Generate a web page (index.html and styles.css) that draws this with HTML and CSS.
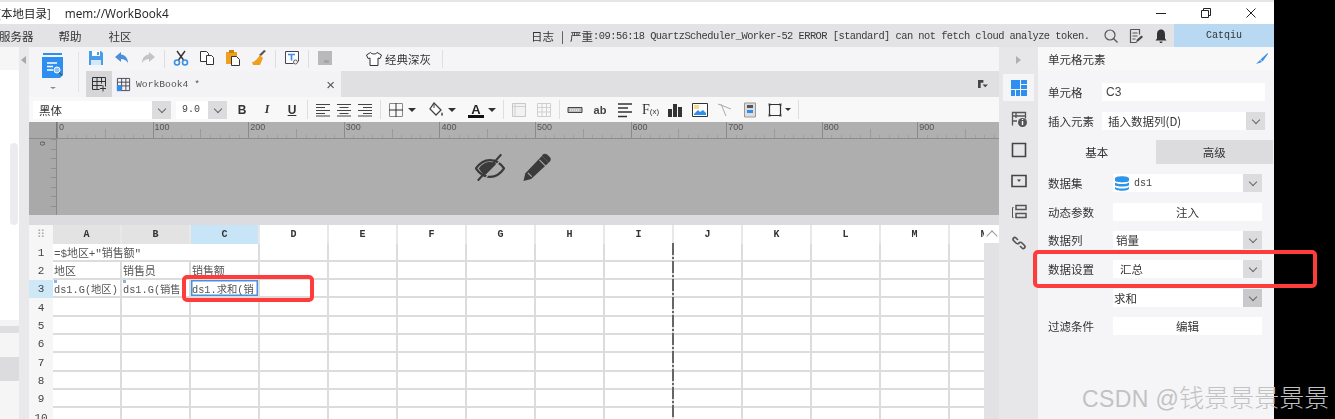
FILE: index.html
```html
<!DOCTYPE html>
<html lang="zh">
<head>
<meta charset="utf-8">
<title>WorkBook4</title>
<link rel="stylesheet" href="styles.css">
</head>
<body>
<div class="screen">
  <div class="app">
    <header class="titlebar">
      <span class="title-path">[本地目录]</span>
      <span class="title-file">mem://WorkBook4</span>
      <div class="win-ctrls">
        <svg class="win-ico" viewBox="0 0 12 12"><path d="M1 6.5h10" stroke="#222" stroke-width="1"/></svg>
        <svg class="win-ico" viewBox="0 0 12 12"><path d="M1.5 3.5h7v7h-7zM3.5 3.5v-2h7v7h-2" fill="none" stroke="#222"/></svg>
        <svg class="win-ico" viewBox="0 0 12 12"><path d="M1.5 1.5l9 9M10.5 1.5l-9 9" stroke="#222"/></svg>
      </div>
    </header>
    <nav class="menubar">
      <span class="menu-item first">服务器</span>
      <span class="menu-item">帮助</span>
      <span class="menu-item">社区</span>
      <div class="log"><span>日志</span><span class="log-sep">|</span><span>严重</span><span class="log-msg">:09:56:18 QuartzScheduler_Worker-52 ERROR [standard] can not fetch cloud analyze token.</span></div>
      <div class="menu-icons">
        <svg class="ico" viewBox="0 0 16 16"><circle cx="7" cy="7" r="5" fill="none" stroke="#555" stroke-width="1.2"/><path d="M10.5 10.5l4 4" stroke="#555" stroke-width="1.2"/></svg>
        <svg class="ico" viewBox="0 0 16 16"><path d="M2.5 1.5h9v5M2.5 1.5v13h6" fill="none" stroke="#555" stroke-width="1.2"/><path d="M4.5 5h5M4.5 8h5M4.5 11h3" stroke="#555"/><path d="M8 14.5l1-3 4.500-4 1.500 1.500-4.500 4z" fill="#444"/></svg>
        <svg class="ico" viewBox="0 0 16 16"><path d="M8 1.500c-3 0-4 2.500-4 5v4l-1.500 2h11L12 10.500v-4c0-2.500-1-5-4-5zM6.500 13.500h3c0 2-3 2-3 0z" fill="#333"/></svg>
      </div>
      <div class="user">Catqiu</div>
    </nav>

    <div class="workspace">
      <aside class="leftpane">
        <div class="lp-head"></div>
        <div class="lp-tree"><div class="lp-thumb"></div></div>
        <div class="lp-bar"></div>
        <div class="lp-list"><div class="lp-sel"></div></div>
      </aside>
      <div class="strip"><span class="tri-left"></span></div>

      <main class="editor">
        <div class="editor-top">
          <div class="brand">
            <svg class="brand-ico" viewBox="0 0 21 29"><path d="M1 0h19v2H1z" fill="#2f8ff0"/><path d="M0 4h21v18l-3 3H0z" fill="#2f8ff0"/><path d="M5 10h10M5 13.500h6M5 17h6" stroke="#fff" stroke-width="1.500"/><circle cx="15" cy="17" r="3" fill="#8cc2f5" stroke="#fff"/><path d="M17 19.500l3 3" stroke="#555" stroke-width="1.300"/></svg>
            <span class="caret small"></span>
          </div>
          <div class="top-right">
            <div class="quick">
              <div class="tools">
                <svg class="ico" viewBox="0 0 16 16"><path d="M1 1h12l2 2v12H1z" fill="#4a9be8"/><path d="M4 1h8v5H4z" fill="#fff"/><path d="M3 10h10v5H3z" fill="#d5e8fa"/><path d="M9 2h2v3H9z" fill="#4a9be8"/></svg>
                <svg class="ico" viewBox="0 0 16 16"><path d="M7 2L1 7l6 5V9c3 0 5 1 7 4 0-5-3-8-7-8.500z" fill="#4a8fd8"/></svg>
                <svg class="ico" viewBox="0 0 16 16"><path d="M9 2l6 5-6 5V9c-3 0-5 1-7 4 0-5 3-8 7-8.500z" fill="#c4c4c6"/></svg>
              </div>
              <i class="sep"></i>
              <div class="tools">
                <svg class="ico" viewBox="0 0 16 16"><path d="M4 1l6.500 9M12 1L5.500 10" stroke="#333" stroke-width="1.400"/><circle cx="4" cy="12.500" r="2.500" fill="none" stroke="#3b8fe6" stroke-width="1.600"/><circle cx="12" cy="12.500" r="2.500" fill="none" stroke="#3b8fe6" stroke-width="1.600"/></svg>
                <svg class="ico" viewBox="0 0 16 16"><path d="M1.500 1.500h6l2 2v8h-8z" fill="#fff" stroke="#333"/><path d="M7.500 5.500h5l2 2v7h-7z" fill="#fff" stroke="#333"/></svg>
                <svg class="ico" viewBox="0 0 16 16"><path d="M1 2h11v12H1z" fill="#f0a020"/><path d="M4 0h5v3H4z" fill="#c98214"/><path d="M6.500 6.500h5l3 3v6h-8z" fill="#fff" stroke="#333"/></svg>
                <svg class="ico" viewBox="0 0 16 16"><path d="M15 1l-5 5-2-1 5-5z" fill="#555"/><path d="M9 5l3 3-3 7H2l-1-3c3 0 5-3 8-7z" fill="#f0a020"/></svg>
              </div>
              <i class="sep"></i>
              <svg class="ico" viewBox="0 0 16 16"><path d="M1.500 1.500h13v10M1.500 1.500v12h8" fill="#fff" stroke="#445"/><path d="M4 4.500h7M7.500 4.500v6" stroke="#3b8fe6" stroke-width="1.600"/><circle cx="11.500" cy="12" r="2" fill="none" stroke="#666"/></svg>
              <i class="sep"></i>
              <svg class="ico" viewBox="0 0 16 16"><path d="M1 1h14v14H1z" fill="#b9b9bb"/><path d="M7 10h5v3H7z" fill="#a5a5a7"/></svg>
              <div class="theme">
                <svg class="ico" viewBox="0 0 16 16"><path d="M5 1.500L1 4l1.500 3.500L4.500 7v7.500h8V7l2 .5L16 4 11.500 1.500c-.5 2-5.500 2-6.500 0z" transform="translate(-.5)" fill="#fff" stroke="#333"/></svg>
                <span>经典深灰</span>
              </div>
              <i class="sep wide"></i>
            </div>
            <div class="tabstrip">
              <div class="tab-add">
                <svg class="ico" viewBox="0 0 16 16"><path d="M1.500 1.500h13v9M1.500 1.500v12h7M1.500 5.500h13M1.500 9.500h10M6 1.500v12M10.500 1.500v6" fill="none" stroke="#333"/><path d="M12 9.500v6M9 12.500h6" stroke="#333"/></svg>
              </div>
              <div class="tab">
                <svg class="ico tab-ico" viewBox="0 0 16 16"><path d="M1.500 1.500h13v13h-13zM1.500 5.500h13M1.500 9.500h13M6 1.500v13M10.500 1.500v13" fill="none" stroke="#445"/><path d="M1 9h5v6H1z" fill="#2f8ff0"/></svg>
                <span class="tab-name">WorkBook4 *</span>
                <span class="tab-close">×</span>
              </div>
              <svg class="tab-menu" viewBox="0 0 12 10"><path d="M1 0h6v3H4v6H1z" fill="#444"/><path d="M6 5h6L9 8z" fill="#444"/></svg>
            </div>
          </div>
        </div>

        <div class="format">
          <div class="select font-sel"><span class="sel-text cjk-big">黑体</span><span class="sel-arrow"><i class="chev"></i></span></div>
          <div class="select size-sel"><span class="sel-text mono">9.0</span><span class="sel-arrow"><i class="chev"></i></span></div>
          <div class="tools bius">
            <b class="fmt-b">B</b><i class="fmt-i">I</i><u class="fmt-u">U</u>
          </div>
          <i class="sep"></i>
          <div class="tools narrow">
            <svg class="ico" viewBox="0 0 16 16"><path d="M1 2.500h14M1 5.500h9M1 8.500h14M1 11.500h9M1 14h14" stroke="#444"/></svg>
            <svg class="ico" viewBox="0 0 16 16"><path d="M1 2.500h14M3.500 5.500h9M1 8.500h14M3.500 11.500h9M1 14h14" stroke="#444"/></svg>
            <svg class="ico" viewBox="0 0 16 16"><path d="M1 2.500h14M6 5.500h9M1 8.500h14M6 11.500h9M1 14h14" stroke="#444"/></svg>
          </div>
          <i class="sep"></i>
          <svg class="ico" viewBox="0 0 16 16"><path d="M1.500 1.500h13v13h-13z" fill="none" stroke="#888"/><path d="M8 1v14M1 8h14" stroke="#333"/></svg>
          <span class="caret"></span>
          <svg class="ico gap-l" viewBox="0 0 16 16"><path d="M6 1l7 7-5 5-6-6z" fill="#fff" stroke="#444" stroke-width="1.300"/><path d="M6 1v5" stroke="#444"/><path d="M14 10c1 2 1.500 3 0 4-1.200-1-1-2 0-4z" fill="#444"/></svg>
          <span class="caret"></span>
          <svg class="ico gap-l" viewBox="0 0 16 16"><path d="M0 13h16v3H0z" fill="#111"/><text class="a-glyph" x="8" y="11.500">A</text></svg>
          <span class="caret"></span>
          <i class="sep"></i>
          <div class="tools">
            <svg class="ico" viewBox="0 0 16 16"><path d="M1.500 1.500h13v13h-13z" fill="#f2f2f2" stroke="#c8c8c8"/><path d="M1.500 4.500h13M4 1.500v13" stroke="#d0d0d0"/></svg>
            <svg class="ico" viewBox="0 0 16 16"><path d="M1.500 1.500h13v13h-13zM1.500 5.500h13M1.500 10h13M6 1.500v13M10.500 1.500v13" fill="none" stroke="#cfcfcf"/></svg>
          </div>
          <i class="sep"></i>
          <div class="tools">
            <svg class="ico" viewBox="0 0 16 16"><path d="M1 5.500h14v5H1z" fill="#bbb" stroke="#444"/><path d="M3 8h10" stroke="#fff" stroke-dasharray="1 1"/></svg>
            <span class="ab">ab</span>
            <svg class="ico" viewBox="0 0 16 16"><path d="M1 2h14M1 6h10M1 10h14M1 14.500h9" stroke="#333" stroke-width="1.700"/></svg>
            <span class="fx">F<small>(x)</small></span>
            <svg class="ico" viewBox="0 0 16 16"><path d="M1 7h4v8H1zM6 2h4v13H6zM11 5h4v10h-4z" fill="#333"/></svg>
            <svg class="ico" viewBox="0 0 16 16"><path d="M.5 1.500h15v13H.5z" fill="#fff" stroke="#333"/><path d="M2 12l4-4 2 2 3-2 3 3v2H2z" fill="#2f8ff0"/><path d="M2 3h5v4H2z" fill="#fbd98a"/></svg>
            <svg class="ico" viewBox="0 0 16 16"><path d="M1 2l13 5M4 2l5 12" stroke="#aaa" fill="none"/></svg>
            <svg class="ico" viewBox="0 0 16 16"><path d="M2.500 1h11v14h-11z" fill="#ddd" stroke="#999"/><path d="M5 3h6v3H5z" fill="#555"/><path d="M5 8h6v3H5z" fill="#2f8ff0"/></svg>
            <svg class="ico" viewBox="0 0 16 16"><path d="M2.500 2.500h11v11h-11z" fill="none" stroke="#333" stroke-width="1.200"/><path d="M1 1h3v3H1zM12 1h3v3h-3zM1 12h3v3H1zM12 12h3v3h-3z" fill="#444" opacity=".35"/></svg>
          </div>
          <span class="caret tiny"></span>
          <i class="sep"></i>
        </div>

        <div class="ruler">
          <div class="ruler-corner"></div>
          <div class="ruler-marks">
            <span>0</span><span>100</span><span>200</span><span>300</span><span>400</span><span>500</span><span>600</span><span>700</span><span>800</span><span>900</span>
          </div>
        </div>
        <div class="canvas">
          <div class="v-ruler"><span class="v-zero">0</span></div>
          <div class="canvas-icons">
            <svg class="big-ico" viewBox="0 0 32 30"><path d="M1 16c4-6 9-9 15-9s11 3 15 9c-4 6-9 9-15 9S5 22 1 16z" fill="none" stroke="#3a3a3a" stroke-width="2.400"/><path d="M4 16c3-5 8-7 12-7 3 0 5 1 7 2L11 23c-3-1-5-4-7-7z" fill="#3a3a3a"/><path d="M28 1L3 29" stroke="#3a3a3a" stroke-width="2.400"/><path d="M28 3L6 29" stroke="#adadad" stroke-width="1.400" transform="translate(2 1)"/></svg>
            <svg class="big-ico" viewBox="0 0 30 30"><path d="M20 3l7 7L9 27l-8 2 2-8z" fill="#3a3a3a"/><path d="M21 1.500c1-1 3-1 4.500 0l3 3c1 1.500 1 3 0 4L27 10l-7-7z" fill="#3a3a3a"/><path d="M17.500 7l6.500 6.500M5.500 20.500l4 4" stroke="#adadad" stroke-width="1.100"/></svg>
          </div>
        </div>
        <div class="canvas-gap"></div>

        <div class="sheet-wrap">
          <div class="sheet">
            <div class="row head">
              <div class="rh corner">⠿</div>
              <div class="c ch on">A</div><div class="c ch on">B</div><div class="c ch sel">C</div><div class="c ch">D</div><div class="c ch">E</div><div class="c ch">F</div><div class="c ch">G</div><div class="c ch">H</div><div class="c ch">I</div><div class="c ch">J</div><div class="c ch">K</div><div class="c ch">L</div><div class="c ch">M</div><div class="c ch">N</div>
            </div>
            <div class="row"><div class="rh">1</div><div class="c merged">=$地区+"销售额"</div><div class="c"></div><div class="c"></div><div class="c"></div><div class="c"></div><div class="c"></div><div class="c"></div><div class="c"></div><div class="c"></div><div class="c"></div><div class="c"></div><div class="c"></div></div>
            <div class="row"><div class="rh">2</div><div class="c">地区</div><div class="c">销售员</div><div class="c">销售额</div><div class="c"></div><div class="c"></div><div class="c"></div><div class="c"></div><div class="c"></div><div class="c"></div><div class="c"></div><div class="c"></div><div class="c"></div><div class="c"></div><div class="c"></div></div>
            <div class="row"><div class="rh active">3</div><div class="c expand">ds1.G(地区)</div><div class="c expand">ds1.G(销售</div><div class="c current">ds1.求和(销</div><div class="c"></div><div class="c"></div><div class="c"></div><div class="c"></div><div class="c"></div><div class="c"></div><div class="c"></div><div class="c"></div><div class="c"></div><div class="c"></div><div class="c"></div></div>
            <div class="row"><div class="rh">4</div><div class="c"></div><div class="c"></div><div class="c"></div><div class="c"></div><div class="c"></div><div class="c"></div><div class="c"></div><div class="c"></div><div class="c"></div><div class="c"></div><div class="c"></div><div class="c"></div><div class="c"></div><div class="c"></div></div>
            <div class="row"><div class="rh">5</div><div class="c"></div><div class="c"></div><div class="c"></div><div class="c"></div><div class="c"></div><div class="c"></div><div class="c"></div><div class="c"></div><div class="c"></div><div class="c"></div><div class="c"></div><div class="c"></div><div class="c"></div><div class="c"></div></div>
            <div class="row"><div class="rh">6</div><div class="c"></div><div class="c"></div><div class="c"></div><div class="c"></div><div class="c"></div><div class="c"></div><div class="c"></div><div class="c"></div><div class="c"></div><div class="c"></div><div class="c"></div><div class="c"></div><div class="c"></div><div class="c"></div></div>
            <div class="row"><div class="rh">7</div><div class="c"></div><div class="c"></div><div class="c"></div><div class="c"></div><div class="c"></div><div class="c"></div><div class="c"></div><div class="c"></div><div class="c"></div><div class="c"></div><div class="c"></div><div class="c"></div><div class="c"></div><div class="c"></div></div>
            <div class="row"><div class="rh">8</div><div class="c"></div><div class="c"></div><div class="c"></div><div class="c"></div><div class="c"></div><div class="c"></div><div class="c"></div><div class="c"></div><div class="c"></div><div class="c"></div><div class="c"></div><div class="c"></div><div class="c"></div><div class="c"></div></div>
            <div class="row"><div class="rh">9</div><div class="c"></div><div class="c"></div><div class="c"></div><div class="c"></div><div class="c"></div><div class="c"></div><div class="c"></div><div class="c"></div><div class="c"></div><div class="c"></div><div class="c"></div><div class="c"></div><div class="c"></div><div class="c"></div></div>
            <div class="row"><div class="rh">10</div><div class="c"></div><div class="c"></div><div class="c"></div><div class="c"></div><div class="c"></div><div class="c"></div><div class="c"></div><div class="c"></div><div class="c"></div><div class="c"></div><div class="c"></div><div class="c"></div><div class="c"></div><div class="c"></div></div>
            <div class="page-break"></div>
          </div>
          <div class="vscroll"><div class="vs-up"><i class="chev up"></i></div></div>
        </div>
      </main>

      <div class="side">
        <span class="tri-right"></span>
        <div class="side-btn active">
          <svg class="side-ico" viewBox="0 0 16 16"><path d="M0 0h9v9H0zM10 0h6v4h-6zM10 5h6v4h-6zM0 10h4v6H0zM5 10h4v6H5zM10 10h6v6h-6z" fill="#2f8ff0"/></svg>
        </div>
        <div class="side-btn">
          <svg class="side-ico" viewBox="0 0 16 16"><path d="M1.500 14.500v-13h13v6M1.500 5h13M5 1.500V7M1.500 10H6" fill="none" stroke="#555" stroke-width="1.300"/><circle cx="11.500" cy="11.500" r="4.500" fill="#555"/><path d="M11.500 10v4M11.500 8v1" stroke="#fff" stroke-width="1.400"/></svg>
        </div>
        <div class="side-btn">
          <svg class="side-ico" viewBox="0 0 16 16"><path d="M1.500 1.500h13v13h-13z" fill="none" stroke="#444" stroke-width="1.600"/></svg>
        </div>
        <div class="side-btn">
          <svg class="side-ico" viewBox="0 0 16 16"><path d="M1 2.500h14v11H1z" fill="none" stroke="#444" stroke-width="1.600"/><path d="M6 6.500h4L8 9z" fill="#444"/></svg>
        </div>
        <div class="side-btn">
          <svg class="side-ico" viewBox="0 0 16 16"><path d="M5 1.500h10v4H5zM5 9.500h10v4H5z" fill="none" stroke="#555" stroke-width="1.500"/><path d="M2.500 3.500h-1v10h1" fill="none" stroke="#555"/></svg>
        </div>
        <div class="side-btn">
          <svg class="side-ico" viewBox="0 0 16 16"><path d="M7 5L5 3C3.500 1.500 1 3.500 2.500 5.500L5 8c1 1 2.500 1 3 0M9 11l2 2c1.500 1.500 4-.5 2.500-2.500L11 8c-1-1-2.500-1-3 0" fill="none" stroke="#555" stroke-width="1.700"/></svg>
        </div>
      </div>

      <section class="panel">
        <div class="panel-head">
          <span>单元格元素</span>
          <svg class="panel-check" viewBox="0 0 12 11"><path d="M11.600 0L4.500 6.500 6.500 8.500 12 1zM4 7l2 2L0 11z" fill="#3b8fe6"/></svg>
        </div>
        <div class="form first-form">
          <label>单元格</label>
          <div class="input"><span class="latin">C3</span></div>
          <label>插入元素</label>
          <div class="select"><span class="sel-text ins">插入数据列(D)</span><span class="sel-arrow"><i class="chev"></i></span></div>
        </div>
        <div class="tabs">
          <div class="tab2 cur">基本</div>
          <div class="tab2">高级</div>
        </div>
        <div class="form second-form">
          <label>数据集</label>
          <div class="select"><span class="sel-text ds"><svg class="db" viewBox="0 0 14 15"><path d="M0 2.500C0 -.5 14 -.5 14 2.500v2C14 7 0 7 0 4.500zM0 6.500c3 2 11 2 14 0v2.500C14 11 0 11 0 9zM0 11c3 2 11 2 14 0v1.500C14 15.500 0 15.500 0 12.500z" fill="#2f95e8"/></svg><span class="mono">ds1</span></span><span class="sel-arrow"><i class="chev"></i></span></div>
          <label>动态参数</label>
          <div class="button">注入</div>
          <label>数据列</label>
          <div class="select"><span class="sel-text tight">销量</span><span class="sel-arrow"><i class="chev"></i></span></div>
          <label>数据设置</label>
          <div class="select"><span class="sel-text loose">汇总</span><span class="sel-arrow"><i class="chev"></i></span></div>
          <span></span>
          <div class="select"><span class="sel-text flush">求和</span><span class="sel-arrow dark"><i class="chev"></i></span></div>
          <label>过滤条件</label>
          <div class="button">编辑</div>
        </div>
      </section>
    </div>
  </div>
  <div class="mark mark-cell"></div>
  <div class="mark mark-setting"></div>
  <div class="watermark">CSDN @<span class="wm-cjk">钱景景景景景</span></div>
</div>
</body>
</html>
```

FILE: styles.css
```css
* { box-sizing: border-box; }
html, body { margin: 0; padding: 0; background: #000; }
body {
  font-family: "Noto Sans CJK SC", "Liberation Sans", sans-serif;
  font-size: 11.5px;
  color: #333;
  overflow: hidden;
}
.screen { position: relative; width: 1335px; height: 419px; overflow: hidden; background: #000; }
.app { width: 1274px; height: 419px; display: flex; flex-direction: column; background: #f5f5f7; filter: blur(.35px); }

.titlebar { height: 24px; flex: none; background: #fff; border-top: 2px solid #e6e6e6; display: flex; align-items: center; color: #222; overflow: hidden; }
.title-path { margin-left: -3px; font-size: 11.500px; }
.title-file { margin-left: 14px; font-family: "Open Sans", sans-serif; font-size: 11.800px; }
.win-ctrls { margin-left: auto; display: flex; gap: 33px; padding-right: 17px; }
.win-ico { width: 12px; height: 12px; }

.menubar { height: 23px; flex: none; background: #e3e3e5; display: flex; align-items: center; color: #333; overflow: hidden; }
.menu-item { margin-right: 27px; white-space: nowrap; }
.menu-item.first { margin-left: -1px; margin-right: 25px; }
.log { position: absolute; left: 531px; top: 25px; height: 22px; display: flex; align-items: center; white-space: nowrap; }
.log-sep { margin: 0 6px 0 7px; }
.log-msg { font-family: "Liberation Mono", monospace; font-size: 10.400px; letter-spacing: -.53px; color: #3a3a3a; }
.menu-icons { margin-left: auto; display: flex; gap: 9px; padding-right: 5px; align-items: center; }
.user { width: 100px; height: 23px; background: #b9d9f3; display: flex; align-items: center; justify-content: center; font-family: "Liberation Mono", monospace; font-size: 10px; color: #333; }

.ico { width: 16px; height: 16px; flex: none; display: block; }
.workspace { flex: 1; display: flex; min-height: 0; }

.leftpane { width: 19px; flex: none; background: #fff; display: flex; flex-direction: column; }
.lp-head { height: 23px; background: #f6f6f7; }
.lp-tree { height: 256px; background: #fff; position: relative; padding-top: 73px; padding-left: 10px; border-bottom: 6px solid #f3f3f4; }
.lp-thumb { width: 8px; height: 82px; background: #ececee; border-radius: 4px; }
.lp-bar { height: 7px; background: #dedee0; }
.lp-list { flex: 1; background: #f5f5f6; padding-top: 24px; }
.lp-sel { height: 24px; background: #dcdcde; }

.strip { width: 10px; flex: none; background: #e9e9eb; padding: 9px 0 0 2px; }
.tri-left { display: block; width: 0; height: 0; border: 4px solid transparent; border-right: 5px solid #a8a8aa; border-left: 0; }

.editor { width: 970px; flex: none; display: flex; flex-direction: column; min-width: 0; background: #f5f5f7; }
.editor-top { height: 50px; flex: none; display: flex; }
.brand { width: 57px; flex: none; padding: 6px 0 0 13px; display: flex; flex-direction: column; align-items: flex-start; position: relative; }
.brand::after { content: ""; position: absolute; left: 49px; top: 5px; width: 1px; height: 40px; background: #e4e4e6; }
.brand-ico { width: 21px; height: 29px; }
.caret { display: block; width: 0; height: 0; flex: none; border: 4px solid transparent; border-top: 4px solid #333; border-bottom: 0; margin-left: 4px; }
.caret.small { border-width: 2px 3px 0; border-top-color: #888; margin: 5px 0 0 8px; }
.caret.tiny { border-width: 3px 3px 0; margin-left: 2px; }

.top-right { flex: 1; min-width: 0; display: flex; flex-direction: column; }
.quick { height: 24px; flex: none; padding-left: 2px; display: flex; align-items: center; }
.quick .ico { margin-top: -3px; }
.tools { display: flex; align-items: center; gap: 10px; }
.sep { display: block; width: 1px; height: 18px; flex: none; background: #dededf; margin: 0 8px; }
.sep.wide { margin-left: 11px; }
.theme { display: flex; align-items: center; gap: 3px; margin-left: 33px; margin-top: -1px; color: #333; white-space: nowrap; }
.theme .ico { margin-top: 0; }

.tabstrip { height: 26px; flex: none; background: #e0e0e2; display: flex; align-items: stretch; }
.tab-add { width: 26px; flex: none; background: #d6d6d8; display: flex; align-items: center; justify-content: center; }
.tab { width: 229px; flex: none; background: #f3f3f5; display: flex; align-items: center; padding: 0 6px 0 4px; gap: 5px; }
.tab-ico { width: 15px; height: 15px; }
.tab-name { font-family: "Liberation Mono", monospace; font-size: 9.700px; color: #555; white-space: nowrap; }
.tab-close { margin-left: auto; font-family: "Liberation Sans", sans-serif; font-size: 15px; line-height: 1; color: #555; }
.tab-menu { width: 11px; height: 9px; margin: 9px 0 0 auto; margin-right: 11px; flex: none; }

.format { height: 25px; flex: none; padding-left: 4px; background: #f8f8f9; display: flex; align-items: center; }
.format .sep { margin: 0 7px; height: 19px; }
.format .tools { gap: 9px; }
.format .tools.narrow { gap: 5px; }
.format .gap-l { margin-left: 12px; }
.select { display: flex; height: 18px; background: #fff; align-items: stretch; min-width: 0; }
.font-sel { width: 138px; flex: none; }
.size-sel { width: 51px; flex: none; margin-left: 5px; }
.sel-text { flex: 1; min-width: 0; display: flex; align-items: center; padding-left: 6px; white-space: nowrap; color: #333; }
.sel-arrow { width: 19px; flex: none; background: #dcdcde; display: flex; align-items: center; justify-content: center; }
.sel-arrow.dark { background: #c9c9cb; }
.chev { display: block; width: 6px; height: 6px; border-right: 1px solid #666; border-bottom: 1px solid #666; transform: translateY(-1px) rotate(45deg); }
.chev.up { transform: translateY(2px) rotate(225deg); border-color: #999; width: 8px; height: 8px; }
.cjk-big { font-size: 11.500px; }
.mono { font-family: "Liberation Mono", monospace; font-size: 10px; color: #444; }
.bius { margin-left: 7px; }
.fmt-b, .fmt-i, .fmt-u { width: 16px; text-align: center; font-family: "Liberation Sans", sans-serif; font-size: 12px; font-weight: 700; color: #333; font-style: normal; }
.fmt-i { font-style: italic; font-family: "Liberation Serif", serif; }
.a-glyph { font-family: "Liberation Sans", sans-serif; font-size: 13px; font-weight: 700; text-anchor: middle; fill: #222; }
.ab { width: 16px; text-align: center; font-family: "Liberation Sans", sans-serif; font-size: 11px; font-weight: 700; color: #444; }
.fx { width: 16px; white-space: nowrap; font-family: "Liberation Serif", serif; font-size: 14px; color: #333; line-height: 1; }
.fx small { font-size: 8px; font-family: "Liberation Sans", sans-serif; }

.ruler { height: 17px; flex: none; display: flex; background: #b0b0b0; border-bottom: 1px solid #8c8c8c; }
.ruler-corner { width: 28px; flex: none; background: #a8a8a8; border-right: 1px solid #777; }
.ruler-marks {
  flex: 1; display: flex; min-width: 0; overflow: hidden;
  background-image:
    repeating-linear-gradient(90deg, #8a8a8a 0 1px, transparent 1px 95.6px),
    repeating-linear-gradient(90deg, #9a9a9a 0 1px, transparent 1px 47.8px),
    repeating-linear-gradient(90deg, #a0a0a0 0 1px, transparent 1px 9.56px);
  background-size: 100% 100%, 100% 9px, 100% 3px;
  background-position: 0 0, 0 bottom, 0 bottom;
  background-repeat: no-repeat;
}
.ruler-marks span { width: 95.6px; flex: none; padding-left: 2px; font-family: "Liberation Sans", sans-serif; font-size: 9px; line-height: 11px; color: #555; }

.canvas { height: 76px; flex: none; background: #aeaeae; display: flex; position: relative; }
.v-ruler { width: 28px; flex: none; background: #a9a9a9; border-right: 1px solid #8a8a8a; position: relative; background-image: repeating-linear-gradient(180deg, #909090 0 1px, transparent 1px 9.56px); background-size: 5px 100%; background-position: right top; background-repeat: no-repeat; }
.v-zero { display: block; transform: rotate(-90deg); font-family: "Liberation Sans", sans-serif; font-size: 8px; color: #444; text-align: center; margin-top: 0; line-height: 9px; }
.canvas-icons { position: absolute; left: 446px; top: 14px; display: flex; gap: 17px; }
.big-ico { width: 30px; height: 29px; display: block; }
.canvas-gap { height: 10px; flex: none; background: #dcdcde; }

.sheet-wrap { flex: 1; min-height: 0; display: flex; }
.sheet { width: 955px; flex: none; overflow: hidden; position: relative; background: #fff; }
.row { display: flex; height: 18.33px; font-family: "Liberation Mono", "Noto Sans CJK SC", monospace; font-size: 10px; }
.row.head { height: 18.500px; }
.rh { width: 24px; flex: none; background: #f6f6f7; display: flex; align-items: center; justify-content: center; font-size: 11px; color: #444; }
.rh.corner { font-size: 11px; color: #aaa; font-family: "DejaVu Sans", sans-serif; }
.rh.active { background: #cfe8f8; }
.c { width: 69px; flex: none; border-right: 2px solid #dcdcdc; border-bottom: 2px solid #dcdcdc; padding-left: 1px; display: flex; align-items: center; overflow: hidden; white-space: nowrap; color: #555; font-size: 11px; letter-spacing: -.1px; position: relative; }
.c.expand, .c.current { font-size: 10.300px; letter-spacing: 0; }
.ch { justify-content: center; padding: 0; font-weight: 700; font-size: 10px; color: #333; border-bottom: 0; border-right: 2px solid #e8e8e8; background: #fff; }
.ch.on { background: #e3e3e4; }
.ch.sel { background: #c8e5f8; }
.c.merged { width: 207px; }
.c.current { box-shadow: inset 0 0 0 1.500px #4a90e2; }
.c.expand::before { content: ""; position: absolute; left: 1px; top: 0; width: 3px; height: 3px; background: #8fb4dc; }
.page-break { position: absolute; left: 643px; top: 18px; bottom: 0; width: 2px; background: repeating-linear-gradient(180deg, #666 0 12px, transparent 12px 14px, #666 14px 16px, transparent 16px 18px); }
.vscroll { width: 15px; flex: none; background: #e2e2e4; }
.vs-up { height: 18px; background: #fff; display: flex; align-items: center; justify-content: center; }

.side { width: 39px; flex: none; background: #e7e7e9; display: flex; flex-direction: column; align-items: center; position: relative; }
.tri-right { display: block; width: 0; height: 0; border: 4px solid transparent; border-left: 5px solid #b0b0b2; border-right: 0; margin: 9px 0 10px 0; }
.side-btn { width: 31px; height: 31px; display: flex; align-items: center; justify-content: center; margin-bottom: 0; flex: none; }
.side-btn.active { background: #f5f5f7; height: 27px; margin-bottom: 2px; }
.side-ico { width: 16px; height: 16px; display: block; }

.panel { width: 236px; flex: none; background: #f5f5f7; display: flex; flex-direction: column; }
.panel-head { height: 23px; flex: none; background: #f8f8f9; display: flex; align-items: center; justify-content: space-between; padding: 0 6px 0 10px; color: #333; }
.panel-check { width: 12px; height: 11px; }
.form { display: grid; align-items: center; }
.form label { color: #333; white-space: nowrap; }
.first-form { grid-template-columns: 54px 1fr; padding: 13px 9px 0 10px; row-gap: 11px; grid-auto-rows: 18px; }
.second-form { grid-template-columns: 65px 1fr; padding: 10px 12px 0 10px; row-gap: 10.700px; grid-auto-rows: 18px; }
.form .sel-text { padding-left: 1px; }
.form .sel-text.ins { padding-left: 6px; }
.form .sel-text.ds { padding-left: 2px; gap: 5px; }
.form .sel-text.loose { padding-left: 7px; }
.form .sel-text.tight { padding-left: 3px; }
.form .sel-text.flush { padding-left: 1px; }
.db { width: 14px; height: 15px; }
.input { height: 18px; background: #fff; display: flex; align-items: center; padding-left: 4px; }
.latin { font-family: "Liberation Sans", sans-serif; font-size: 12px; color: #444; }
.button { height: 18px; background: #fff; display: flex; align-items: center; justify-content: center; color: #333; }
.tabs { display: flex; height: 24px; margin-top: 10px; flex: none; padding-right: 1px; }
.tab2 { flex: 1; display: flex; align-items: center; justify-content: center; background: #dcdcde; color: #333; }
.tab2.cur { background: #f5f5f7; }

.mark { position: absolute; border: 4px solid #ff3c3c; border-radius: 5px; pointer-events: none; }
.mark-cell { left: 182px; top: 275px; width: 132px; height: 27px; }
.mark-setting { left: 1033px; top: 250px; width: 284px; height: 38px; }
.watermark { position: absolute; left: 1082px; top: 380px; white-space: nowrap; font-family: "Liberation Sans", "Noto Sans CJK SC", sans-serif; font-size: 23px; line-height: 32px; color: #c2c2c2; letter-spacing: .4px; }
.wm-cjk { font-family: "Noto Sans CJK SC", sans-serif; font-size: 25px; letter-spacing: 0; font-weight: 300; }
```
